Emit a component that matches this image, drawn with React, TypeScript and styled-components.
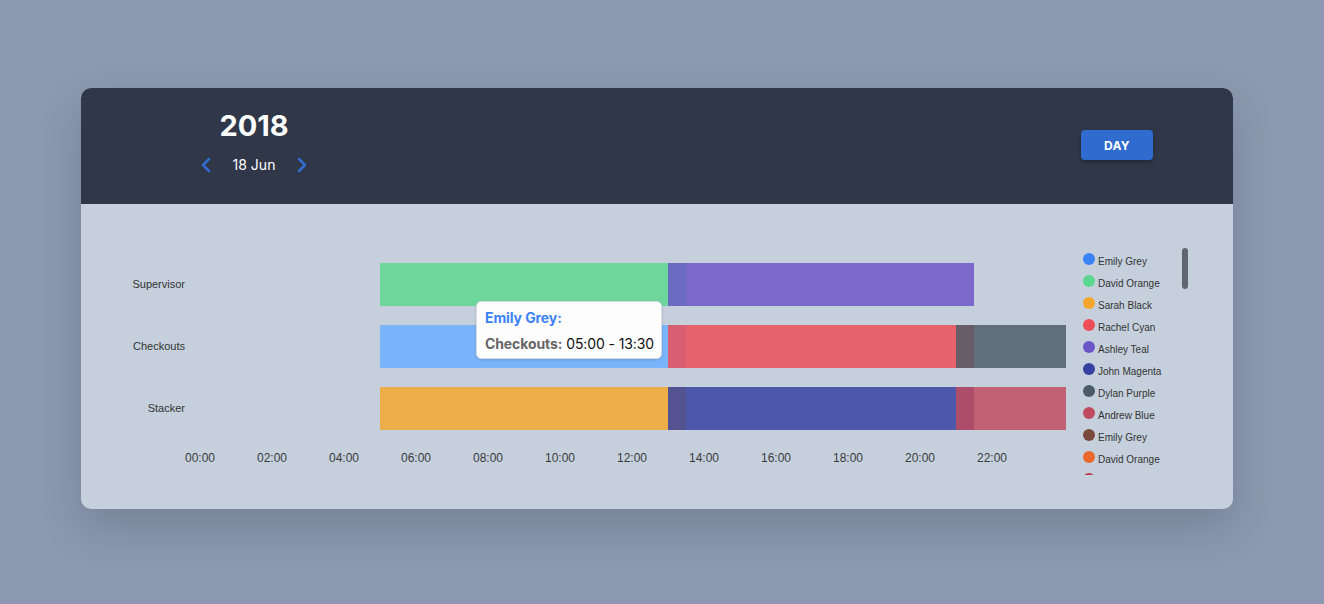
import React from "react";
import styled, { createGlobalStyle } from "styled-components";
import { ChevronLeft, ChevronRight } from "lucide-react";

const PX_PER_HOUR = 36;
const TRACK_WIDTH = 866;

const GlobalStyle = createGlobalStyle`
  html, body { margin: 0; padding: 0; }
  body {
    background: #8c99b0;
    font-family: Inter, "Noto Sans", sans-serif;
    width: 1324px;
    height: 604px;
    overflow: hidden;
  }
`;

const Page = styled.div`
  padding: 88px 0 0 81px;
`;

const Card = styled.div`
  width: 1152px;
  height: 421px;
  border-radius: 10px;
  overflow: hidden;
  background: #c6d0dc;
  box-shadow: 0 18px 40px rgba(40, 50, 70, 0.22);
  display: flex;
  flex-direction: column;
`;

const Header = styled.header`
  height: 116px;
  box-sizing: border-box;
  background: #2f3749;
  padding: 21px 80px 0 80px;
  display: flex;
  justify-content: space-between;
  align-items: flex-start;
`;

const DateBlock = styled.div`
  width: 186px;
  display: flex;
  flex-direction: column;
  align-items: center;
  gap: 10px;
`;

const Year = styled.div`
  color: #ffffff;
  font-size: 29px;
  font-weight: 700;
  line-height: 34px;
`;

const DateNav = styled.div`
  display: flex;
  align-items: center;
  gap: 15px;
  color: #ffffff;
  font-size: 14px;
  line-height: 20px;
`;

const NavIcon = styled.span`
  display: flex;
  color: #336ccf;
`;

const DayButton = styled.button`
  margin-top: 21px;
  width: 72px;
  height: 30px;
  border: none;
  border-radius: 4px;
  background: #306bcf;
  color: #ffffff;
  font-family: Inter, sans-serif;
  font-weight: 700;
  font-size: 12px;
  letter-spacing: 0.3px;
  box-shadow: 0 2px 4px rgba(0, 0, 0, 0.3);
  cursor: pointer;
`;

const Body = styled.div`
  flex: 1;
  display: flex;
  padding: 44px 0 0 0;
  font-family: "Liberation Sans", Arial, sans-serif;
`;

const Chart = styled.div`
  display: flex;
  flex-direction: column;
  gap: 19px;
  margin-top: 15px;
`;

const Row = styled.div`
  display: flex;
  align-items: center;
  gap: 15px;
`;

const RowLabel = styled.div`
  width: 104px;
  text-align: right;
  font-size: 11px;
  line-height: 13px;
  margin-top: -1px;
  color: #333;
`;

const Track = styled.div`
  position: relative;
  width: ${TRACK_WIDTH}px;
  height: 43px;
`;

const BarClip = styled.div`
  position: absolute;
  inset: 0;
  overflow: hidden;
`;

const Bar = styled.div<{ $color: string; $hovered?: boolean }>`
  position: absolute;
  top: 0;
  bottom: 0;
  background: ${(p) => p.$color};
  opacity: ${(p) => (p.$hovered ? 1 : 0.83)};
`;

const AxisRow = styled.div`
  display: flex;
  margin-left: 83px;
  margin-top: 2px;
`;

const Tick = styled.div`
  width: 72px;
  text-align: center;
  font-size: 12px;
  line-height: 14px;
  color: #3a3a3a;
`;

const Tooltip = styled.div`
  position: absolute;
  left: 276px;
  top: -24px;
  width: 186px;
  height: 58px;
  box-sizing: border-box;
  z-index: 5;
  background: #fdfdfe;
  border: 1px solid #d6dae2;
  border-radius: 5px;
  box-shadow: 0 1px 3px rgba(0, 0, 0, 0.12);
  padding: 6px 0 0 8px;
  font-family: Inter, sans-serif;
  font-size: 14px;
  letter-spacing: -0.1px;
  display: flex;
  flex-direction: column;
  gap: 6px;
`;

const TipTitle = styled.div`
  color: #3b82f6;
  font-weight: 700;
  line-height: 20px;
`;

const TipLine = styled.div`
  color: #111;
  line-height: 20px;
  white-space: nowrap;
`;

const TipKey = styled.span`
  color: #666;
  font-weight: 700;
`;

const Legend = styled.div`
  position: relative;
  margin-left: 17px;
  width: 105px;
  height: 227px;
  overflow: hidden;
`;

const LegendList = styled.ul`
  list-style: none;
  margin: 0;
  padding: 5px 0 0 0;
`;

const LegendItem = styled.li`
  display: flex;
  align-items: flex-start;
  gap: 3px;
  height: 22px;
`;

const Dot = styled.span<{ $color: string }>`
  width: 12px;
  height: 12px;
  border-radius: 50%;
  background: ${(p) => p.$color};
  flex: none;
`;

const LegendText = styled.span`
  font-size: 10px;
  line-height: 12px;
  padding-top: 3px;
  color: #333;
  white-space: nowrap;
`;

const ScrollThumb = styled.div`
  position: absolute;
  top: 0;
  right: 0;
  width: 6px;
  height: 41px;
  border-radius: 3px;
  background: #60656f;
`;

type Seg = { start: number; end: number; color: string; hovered?: boolean };

const rows: { label: string; segs: Seg[] }[] = [
  {
    label: "Supervisor",
    segs: [
      { start: 5, end: 13.5, color: "#5ad88e" },
      { start: 13, end: 21.5, color: "#6b55c9" },
    ],
  },
  {
    label: "Checkouts",
    segs: [
      { start: 5, end: 13.5, color: "#7ab4fa", hovered: true },
      { start: 13, end: 21.5, color: "#ec4d57" },
      { start: 21, end: 24.1, color: "#4c5b69" },
    ],
  },
  {
    label: "Stacker",
    segs: [
      { start: 5, end: 13.5, color: "#f4a72b" },
      { start: 13, end: 21.5, color: "#3540a0" },
      { start: 21, end: 24.1, color: "#c04b5f" },
    ],
  },
];

const legend: { name?: string; color: string }[] = [
  { name: "Emily Grey", color: "#3b82f6" },
  { name: "David Orange", color: "#5ad88e" },
  { name: "Sarah Black", color: "#f4a72b" },
  { name: "Rachel Cyan", color: "#ec4d57" },
  { name: "Ashley Teal", color: "#6b55c9" },
  { name: "John Magenta", color: "#3540a0" },
  { name: "Dylan Purple", color: "#4c5b69" },
  { name: "Andrew Blue", color: "#c04b5f" },
  { name: "Emily Grey", color: "#7a4a3c" },
  { name: "David Orange", color: "#e8692b" },
  { color: "#c0394b" },
];

const ticks = Array.from({ length: 12 }, (_, i) => `${String(i * 2).padStart(2, "0")}:00`);

export default function App() {
  return (
    <>
      <GlobalStyle />
      <Page>
        <Card>
          <Header>
            <DateBlock>
              <Year>2018</Year>
              <DateNav>
                <NavIcon>
                  <ChevronLeft size={24} strokeWidth={2.5} />
                </NavIcon>
                <span>18 Jun</span>
                <NavIcon>
                  <ChevronRight size={24} strokeWidth={2.5} />
                </NavIcon>
              </DateNav>
            </DateBlock>
            <DayButton>DAY</DayButton>
          </Header>
          <Body>
            <Chart>
              {rows.map((row) => (
                <Row key={row.label}>
                  <RowLabel>{row.label}</RowLabel>
                  <Track>
                    <BarClip>
                      {row.segs.map((s, i) => (
                        <Bar
                          key={i}
                          $color={s.color}
                          $hovered={s.hovered}
                          style={{
                            left: s.start * PX_PER_HOUR,
                            width: (s.end - s.start) * PX_PER_HOUR,
                          }}
                        />
                      ))}
                    </BarClip>
                    {row.label === "Checkouts" && (
                      <Tooltip>
                        <TipTitle>Emily Grey:</TipTitle>
                        <TipLine>
                          <TipKey>Checkouts:</TipKey> 05:00 - 13:30
                        </TipLine>
                      </Tooltip>
                    )}
                  </Track>
                </Row>
              ))}
              <AxisRow>
                {ticks.map((t) => (
                  <Tick key={t}>{t}</Tick>
                ))}
              </AxisRow>
            </Chart>
            <Legend>
              <LegendList>
                {legend.map((l, i) => (
                  <LegendItem key={i}>
                    <Dot $color={l.color} />
                    {l.name && <LegendText>{l.name}</LegendText>}
                  </LegendItem>
                ))}
              </LegendList>
              <ScrollThumb />
            </Legend>
          </Body>
        </Card>
      </Page>
    </>
  );
}
